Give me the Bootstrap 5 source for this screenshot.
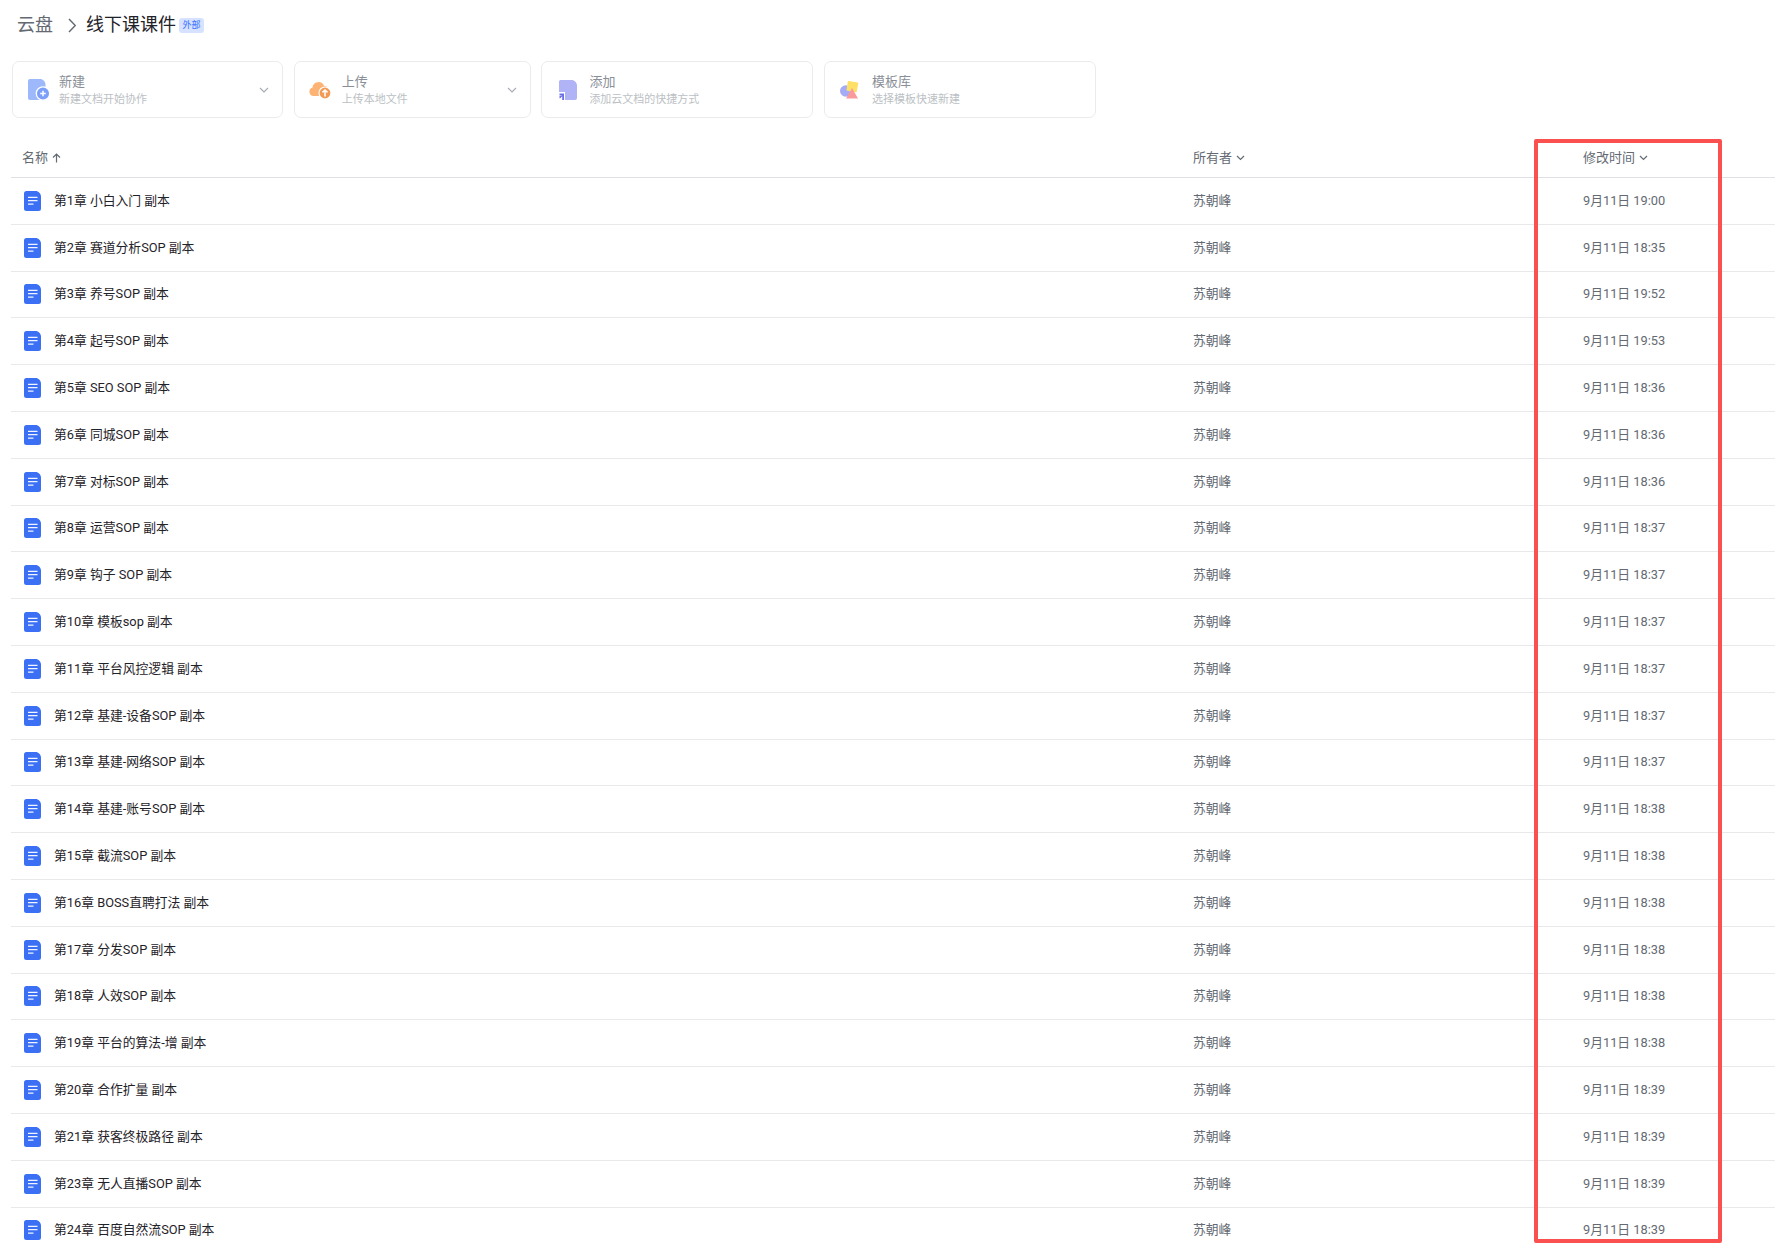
<!DOCTYPE html>
<html lang="zh-CN">
<head>
<meta charset="utf-8">
<title>线下课课件</title>
<link href="https://cdn.jsdelivr.net/npm/bootstrap@5.3.0/dist/css/bootstrap.min.css" rel="stylesheet">
<style>
html,body{height:1249px;overflow:hidden;background:#fff}
body{font-family:"Liberation Sans","Noto Sans CJK SC",sans-serif;position:relative;color:#1f2329}
.crumb{height:50px;margin-bottom:11px;padding-left:17px;font-size:18px;line-height:22px}
.crumb-root{color:#646a73}
.crumb-now{color:#1f2329}
.crumb-sep{margin:0 10px 0 15px}
.ext-tag{font-size:9px;line-height:15px;height:15px;width:25px;background:#d6e2ff;color:#3370ff;border-radius:3px;margin-left:3px;text-align:center}
.tools{padding-left:12px;height:57px;gap:10.7px}
.tool{height:57px;border:1px solid #ebebec;border-radius:7px;background:#fff;padding-left:15px;padding-right:13px}
.tool-a{width:271px}.tool-b{width:237px;padding-left:14px}.tool-c{width:272px;padding-left:17px}.tool-d{width:272px}
.tool-text{margin-left:9px;line-height:1}
.tool-b .tool-text{margin-left:11px}
.tool-c .tool-text{margin-left:12px}
.tool-d .tool-text{margin-left:13px}
.tool-title{font-size:13px;color:#8a8f97;line-height:16px}
.tool-sub{font-size:11px;color:#bbbfc4;line-height:14px;margin-top:2px}
.list-wrap{margin-left:11px}
.head-row{height:60px;padding-top:21px;font-size:13px;color:#646a73;border-bottom:1px solid #dee0e3;align-items:center}
.doc-row{height:46.8px;padding-bottom:1px;border-bottom:1px solid #e8e9eb;font-size:12.8px;align-items:center;font-family:Roboto,"Noto Sans CJK SC",sans-serif}
.cell-name{width:1182px;padding-left:13px;flex:none}
.head-row .cell-name{padding-left:11px}
.cell-owner{width:390px;flex:none;color:#646a73}
.cell-time{color:#646a73}
.doc-ico{width:17px;height:20px;margin-right:13px;margin-top:1px;flex:none}
.mark-box{position:absolute;left:1534px;top:139px;width:188px;height:1104px;border:4px solid #fb5050;border-radius:2px;pointer-events:none}
</style>
</head>
<body>
<svg width="0" height="0" class="position-absolute">
<symbol id="docblue" viewBox="0 0 17 20"><path d="M2.500 0H11.500C14.500 0 17 2.500 17 5.500V17.500A2.500 2.500 0 0 1 14.500 20H2.500A2.500 2.500 0 0 1 0 17.500V2.500A2.500 2.500 0 0 1 2.500 0Z" fill="#3b70f5"/><path d="M4 6.300H13.500M4 9.700H13.500M4 13.100H9.500" stroke="#fff" stroke-opacity=".92" stroke-width="1.300" fill="none"/></symbol>
</svg>
<div class="crumb d-flex align-items-center">
<span class="crumb-root">云盘</span>
<svg class="crumb-sep" width="8" height="15" viewBox="0 0 8 15"><path d="M1 1L7.300 7.500L1 14" fill="none" stroke="#646a73" stroke-width="1.500"/></svg>
<span class="crumb-now">线下课课件</span>
<span class="ext-tag">外部</span>
</div>
<div class="tools d-flex">
<div class="tool tool-a d-flex align-items-center">
<svg width="22" height="22" viewBox="0 0 22 22"><path d="M2 0H12C15 0 17.500 2.500 17.500 5.500V18.500A2.500 2.500 0 0 1 15 21H2A2 2 0 0 1 0 19V2A2 2 0 0 1 2 0Z" fill="#9db9fb"/><circle cx="15" cy="14.500" r="6.700" fill="#7c9ffa" stroke="#fff" stroke-width="1.300"/><path d="M12.200 14.500H17.800M15 11.700V17.300" stroke="#fff" stroke-width="1.500"/></svg>
<div class="tool-text flex-grow-1"><div class="tool-title">新建</div><div class="tool-sub">新建文档开始协作</div></div>
<svg width="10" height="6" viewBox="0 0 10 6"><path d="M1 1L5 5L9 1" fill="none" stroke="#a8acb3" stroke-width="1.200"/></svg>
</div>
<div class="tool tool-b d-flex align-items-center">
<svg width="22" height="20" viewBox="0 0 22 20"><path d="M4.500 16A4.300 4.300 0 0 1 3.500 7.600A6 6 0 0 1 15 5.800A5.200 5.200 0 0 1 16 16Z" fill="#fdb373"/><circle cx="16" cy="13" r="6" fill="#f29b57" stroke="#fff" stroke-width="1.100"/><path d="M16 16.500V10M13.500 12.400L16 10L18.500 12.400" fill="none" stroke="#fff" stroke-width="1.500"/></svg>
<div class="tool-text flex-grow-1"><div class="tool-title">上传</div><div class="tool-sub">上传本地文件</div></div>
<svg width="10" height="6" viewBox="0 0 10 6"><path d="M1 1L5 5L9 1" fill="none" stroke="#a8acb3" stroke-width="1.200"/></svg>
</div>
<div class="tool tool-c d-flex align-items-center">
<svg width="18" height="20" viewBox="0 0 18 20"><path d="M0 1.500A1.500 1.500 0 0 1 1.500 0H12.500C15.500 0 18 2.500 18 5.500V18A2 2 0 0 1 16 20H6V12H0Z" fill="#b0b4f6"/><path d="M0.500 13.500H5V20H3.200V16.200L1 18.500L0.500 18V15.500H2.500V15H0.500Z" fill="#6a70e8"/></svg>
<div class="tool-text flex-grow-1"><div class="tool-title">添加</div><div class="tool-sub">添加云文档的快捷方式</div></div>
</div>
<div class="tool tool-d d-flex align-items-center">
<svg width="19" height="19" viewBox="0 0 19 19"><circle cx="5.800" cy="11" r="5.800" fill="#a5abf7"/><path d="M9 1L17.500 2.500A1 1 0 0 1 18.300 3.700L16.800 11.500A1 1 0 0 1 15.600 12.300L7.200 10.800A1 1 0 0 1 6.500 9.600L7.800 1.800A1 1 0 0 1 9 1Z" fill="#ffe066"/><path d="M12 8L18 18.500H6Z" fill="#fb9a9a"/></svg>
<div class="tool-text flex-grow-1"><div class="tool-title">模板库</div><div class="tool-sub">选择模板快速新建</div></div>
</div>
</div>
<div class="list-wrap">
<div class="head-row d-flex">
<div class="cell-name d-flex align-items-center">名称<svg width="9" height="10" viewBox="0 0 9 10" class="ms-1"><path d="M4.500 9.500V1M1 4.500L4.500 1L8 4.500" fill="none" stroke="#646a73" stroke-width="1.200"/></svg></div>
<div class="cell-owner d-flex align-items-center">所有者<svg width="9" height="6" viewBox="0 0 9 6" class="ms-1"><path d="M1 1L4.500 4.500L8 1" fill="none" stroke="#646a73" stroke-width="1.200"/></svg></div>
<div class="cell-time d-flex align-items-center">修改时间<svg width="9" height="6" viewBox="0 0 9 6" class="ms-1"><path d="M1 1L4.500 4.500L8 1" fill="none" stroke="#646a73" stroke-width="1.200"/></svg></div>
</div>
<div id="rows">
<div class="doc-row d-flex"><div class="cell-name d-flex align-items-center"><svg class="doc-ico"><use href="#docblue"/></svg>第1章 小白入门 副本</div><div class="cell-owner">苏朝峰</div><div class="cell-time">9月11日 19:00</div></div>
<div class="doc-row d-flex"><div class="cell-name d-flex align-items-center"><svg class="doc-ico"><use href="#docblue"/></svg>第2章 赛道分析SOP 副本</div><div class="cell-owner">苏朝峰</div><div class="cell-time">9月11日 18:35</div></div>
<div class="doc-row d-flex"><div class="cell-name d-flex align-items-center"><svg class="doc-ico"><use href="#docblue"/></svg>第3章 养号SOP 副本</div><div class="cell-owner">苏朝峰</div><div class="cell-time">9月11日 19:52</div></div>
<div class="doc-row d-flex"><div class="cell-name d-flex align-items-center"><svg class="doc-ico"><use href="#docblue"/></svg>第4章 起号SOP 副本</div><div class="cell-owner">苏朝峰</div><div class="cell-time">9月11日 19:53</div></div>
<div class="doc-row d-flex"><div class="cell-name d-flex align-items-center"><svg class="doc-ico"><use href="#docblue"/></svg>第5章 SEO SOP 副本</div><div class="cell-owner">苏朝峰</div><div class="cell-time">9月11日 18:36</div></div>
<div class="doc-row d-flex"><div class="cell-name d-flex align-items-center"><svg class="doc-ico"><use href="#docblue"/></svg>第6章 同城SOP 副本</div><div class="cell-owner">苏朝峰</div><div class="cell-time">9月11日 18:36</div></div>
<div class="doc-row d-flex"><div class="cell-name d-flex align-items-center"><svg class="doc-ico"><use href="#docblue"/></svg>第7章 对标SOP 副本</div><div class="cell-owner">苏朝峰</div><div class="cell-time">9月11日 18:36</div></div>
<div class="doc-row d-flex"><div class="cell-name d-flex align-items-center"><svg class="doc-ico"><use href="#docblue"/></svg>第8章 运营SOP 副本</div><div class="cell-owner">苏朝峰</div><div class="cell-time">9月11日 18:37</div></div>
<div class="doc-row d-flex"><div class="cell-name d-flex align-items-center"><svg class="doc-ico"><use href="#docblue"/></svg>第9章 钩子 SOP 副本</div><div class="cell-owner">苏朝峰</div><div class="cell-time">9月11日 18:37</div></div>
<div class="doc-row d-flex"><div class="cell-name d-flex align-items-center"><svg class="doc-ico"><use href="#docblue"/></svg>第10章 模板sop 副本</div><div class="cell-owner">苏朝峰</div><div class="cell-time">9月11日 18:37</div></div>
<div class="doc-row d-flex"><div class="cell-name d-flex align-items-center"><svg class="doc-ico"><use href="#docblue"/></svg>第11章 平台风控逻辑 副本</div><div class="cell-owner">苏朝峰</div><div class="cell-time">9月11日 18:37</div></div>
<div class="doc-row d-flex"><div class="cell-name d-flex align-items-center"><svg class="doc-ico"><use href="#docblue"/></svg>第12章 基建-设备SOP 副本</div><div class="cell-owner">苏朝峰</div><div class="cell-time">9月11日 18:37</div></div>
<div class="doc-row d-flex"><div class="cell-name d-flex align-items-center"><svg class="doc-ico"><use href="#docblue"/></svg>第13章 基建-网络SOP 副本</div><div class="cell-owner">苏朝峰</div><div class="cell-time">9月11日 18:37</div></div>
<div class="doc-row d-flex"><div class="cell-name d-flex align-items-center"><svg class="doc-ico"><use href="#docblue"/></svg>第14章 基建-账号SOP 副本</div><div class="cell-owner">苏朝峰</div><div class="cell-time">9月11日 18:38</div></div>
<div class="doc-row d-flex"><div class="cell-name d-flex align-items-center"><svg class="doc-ico"><use href="#docblue"/></svg>第15章 截流SOP 副本</div><div class="cell-owner">苏朝峰</div><div class="cell-time">9月11日 18:38</div></div>
<div class="doc-row d-flex"><div class="cell-name d-flex align-items-center"><svg class="doc-ico"><use href="#docblue"/></svg>第16章 BOSS直聘打法 副本</div><div class="cell-owner">苏朝峰</div><div class="cell-time">9月11日 18:38</div></div>
<div class="doc-row d-flex"><div class="cell-name d-flex align-items-center"><svg class="doc-ico"><use href="#docblue"/></svg>第17章 分发SOP 副本</div><div class="cell-owner">苏朝峰</div><div class="cell-time">9月11日 18:38</div></div>
<div class="doc-row d-flex"><div class="cell-name d-flex align-items-center"><svg class="doc-ico"><use href="#docblue"/></svg>第18章 人效SOP 副本</div><div class="cell-owner">苏朝峰</div><div class="cell-time">9月11日 18:38</div></div>
<div class="doc-row d-flex"><div class="cell-name d-flex align-items-center"><svg class="doc-ico"><use href="#docblue"/></svg>第19章 平台的算法-增 副本</div><div class="cell-owner">苏朝峰</div><div class="cell-time">9月11日 18:38</div></div>
<div class="doc-row d-flex"><div class="cell-name d-flex align-items-center"><svg class="doc-ico"><use href="#docblue"/></svg>第20章 合作扩量 副本</div><div class="cell-owner">苏朝峰</div><div class="cell-time">9月11日 18:39</div></div>
<div class="doc-row d-flex"><div class="cell-name d-flex align-items-center"><svg class="doc-ico"><use href="#docblue"/></svg>第21章 获客终极路径 副本</div><div class="cell-owner">苏朝峰</div><div class="cell-time">9月11日 18:39</div></div>
<div class="doc-row d-flex"><div class="cell-name d-flex align-items-center"><svg class="doc-ico"><use href="#docblue"/></svg>第23章 无人直播SOP 副本</div><div class="cell-owner">苏朝峰</div><div class="cell-time">9月11日 18:39</div></div>
<div class="doc-row d-flex"><div class="cell-name d-flex align-items-center"><svg class="doc-ico"><use href="#docblue"/></svg>第24章 百度自然流SOP 副本</div><div class="cell-owner">苏朝峰</div><div class="cell-time">9月11日 18:39</div></div>
</div>
</div>
<div class="mark-box"></div>
<script src="https://cdn.jsdelivr.net/npm/bootstrap@5.3.0/dist/js/bootstrap.bundle.min.js"></script>
</body>
</html>
